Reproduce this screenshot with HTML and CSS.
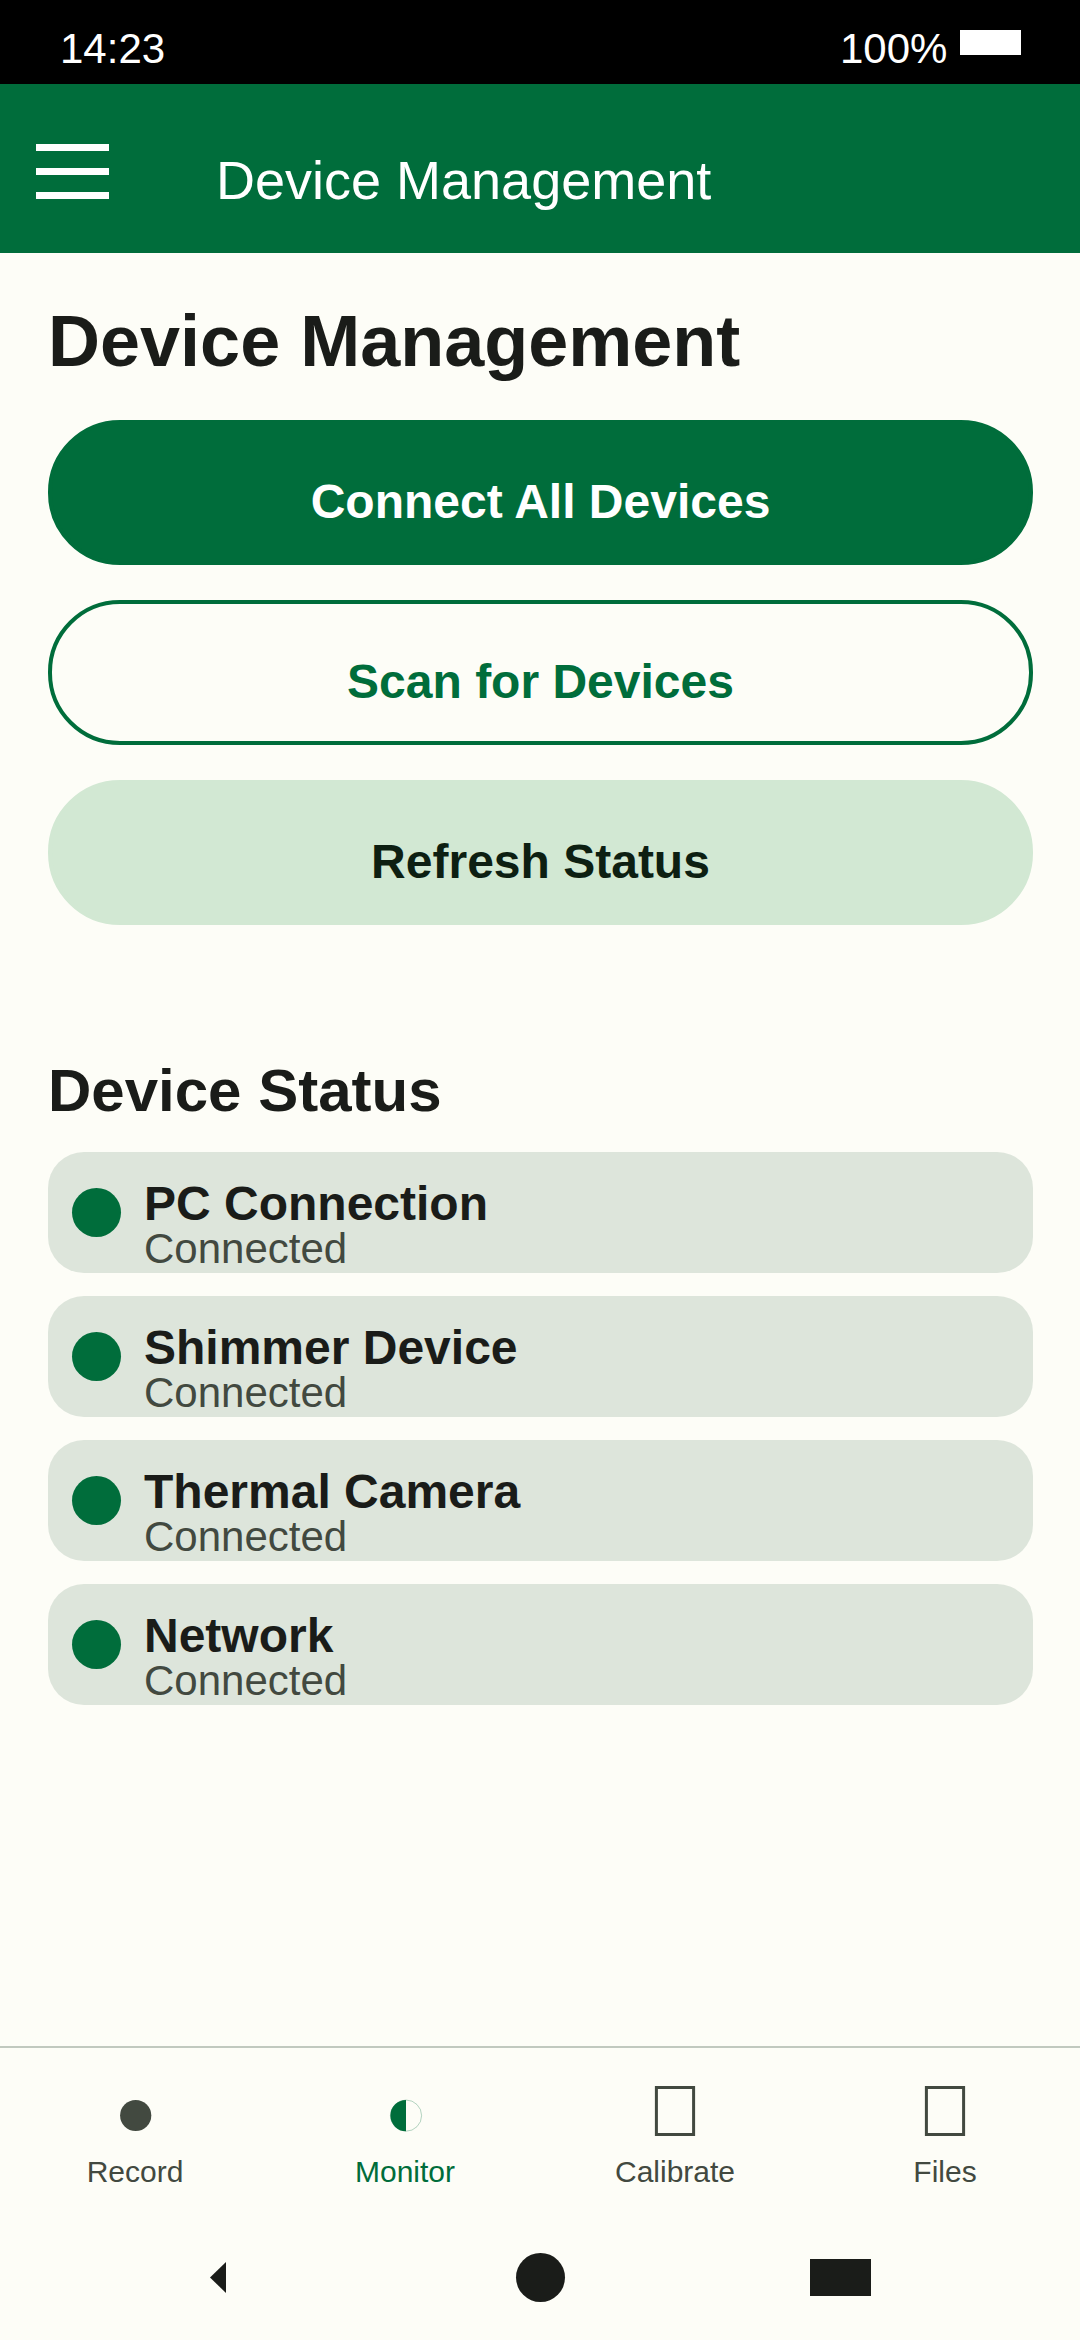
FILE: index.html
```html
<!DOCTYPE html>
<html lang="en">
<head>
  <meta charset="utf-8">
  <title>Device Management</title>
  <link rel="stylesheet" href="styles.css">
</head>
<body>
  <div class="screen">
    <div class="status-bar">
      <span class="clock">14:23</span>
      <span class="battery-level">100%</span>
      <span class="battery"></span>
    </div>
    <header class="app-bar">
      <div class="menu"><span></span><span></span><span></span></div>
      <div class="app-title">Device Management</div>
    </header>
    <main class="content">
      <h1 class="heading">Device Management</h1>
      <div class="actions">
        <button class="btn btn-filled">Connect All Devices</button>
        <button class="btn btn-outlined">Scan for Devices</button>
        <button class="btn btn-tonal">Refresh Status</button>
      </div>
      <h2 class="subheading">Device Status</h2>
      <div class="devices">
        <div class="device"><span class="dot"></span><div class="info"><div class="name">PC Connection</div><div class="state">Connected</div></div></div>
        <div class="device"><span class="dot"></span><div class="info"><div class="name">Shimmer Device</div><div class="state">Connected</div></div></div>
        <div class="device"><span class="dot"></span><div class="info"><div class="name">Thermal Camera</div><div class="state">Connected</div></div></div>
        <div class="device"><span class="dot"></span><div class="info"><div class="name">Network</div><div class="state">Connected</div></div></div>
      </div>
    </main>
    <nav class="tabs">
      <div class="tab">
        <svg class="icon" viewBox="0 0 60 60"><circle cx="30.7" cy="35.5" r="15.6" fill="currentColor"/></svg>
        <span>Record</span>
      </div>
      <div class="tab active">
        <svg class="icon" viewBox="0 0 60 60"><circle cx="31" cy="35.6" r="15.6" fill="none" stroke="currentColor" stroke-width="0.3"/><path d="M31 20A15.6 15.6 0 0 0 31 51.2Z" fill="currentColor"/></svg>
        <span>Monitor</span>
      </div>
      <div class="tab">
        <svg class="icon" viewBox="0 0 60 60"><rect x="11.4" y="7.5" width="37.2" height="47" fill="none" stroke="currentColor" stroke-width="3"/></svg>
        <span>Calibrate</span>
      </div>
      <div class="tab">
        <svg class="icon" viewBox="0 0 60 60"><rect x="11.4" y="7.5" width="37.2" height="47" fill="none" stroke="currentColor" stroke-width="3"/></svg>
        <span>Files</span>
      </div>
    </nav>
    <div class="system-nav">
      <svg class="back" viewBox="0 0 16 31"><path d="M0 15.5L16 0V31Z" fill="currentColor"/></svg>
      <span class="home"></span>
      <span class="recents"></span>
    </div>
  </div>
</body>
</html>
```

FILE: styles.css
```css
* {
  box-sizing: border-box;
  margin: 0;
}

body {
  background: #fdfdf7;
  color: #1a1c19;
  font-family: "Liberation Sans", Arial, sans-serif;
}

.screen {
  display: flex;
  flex-direction: column;
  width: 1080px;
  height: 2340px;
  overflow: hidden;
}

.status-bar {
  display: flex;
  align-items: flex-start;
  height: 84px;
  padding: 25px 59px 0 60px;
  background: #000;
  color: #fff;
  font-size: 42px;
  line-height: 47px;
}

.clock {
  flex: 1;
}

.battery-level {
  width: 120px;
}

.battery {
  width: 61px;
  height: 25px;
  margin-top: 5px;
  background: #fff;
}

.app-bar {
  display: flex;
  align-items: flex-start;
  gap: 107px;
  height: 169px;
  padding: 60px 36px 0;
  background: #006d3b;
  color: #fff;
}

.menu {
  display: grid;
  gap: 17px;
  width: 73px;
}

.menu span {
  height: 7px;
  background: #fff;
}

.app-title {
  padding-top: 6px;
  font-size: 54px;
  line-height: 60px;
}

.content {
  flex: 1;
  padding: 48px 47px 0 48px;
}

.heading {
  font-size: 72px;
  line-height: 80px;
}

.actions {
  display: grid;
  gap: 35px;
  margin-top: 39px;
}

.btn {
  height: 145px;
  padding: 18px 0 0;
  border: 4px solid transparent;
  border-radius: 72px;
  font: bold 48px/53px "Liberation Sans", Arial, sans-serif;
  text-align: center;
}

.btn-filled {
  border-color: #006d3b;
  background: #006d3b;
  color: #fff;
}

.btn-outlined {
  border-color: #006d3b;
  background: transparent;
  color: #006d3b;
}

.btn-tonal {
  border-color: #d2e8d3;
  background: #d2e8d3;
  color: #0d1f12;
}

.subheading {
  margin-top: 132px;
  font-size: 60px;
  line-height: 67px;
}

.devices {
  display: grid;
  gap: 23px;
  margin-top: 28px;
}

.device {
  display: flex;
  align-items: flex-start;
  gap: 23px;
  height: 121px;
  padding: 25px 24px 0;
  border-radius: 36px;
  background: #dde5db;
}

.dot {
  width: 49px;
  height: 49px;
  margin-top: 11px;
  border-radius: 50%;
  background: #006d3b;
}

.name {
  font-size: 48px;
  font-weight: bold;
  line-height: 53px;
}

.state {
  margin-top: -5px;
  color: #424940;
  font-size: 42px;
  line-height: 47px;
}

.tabs {
  display: grid;
  grid-template-columns: repeat(4, 1fr);
  height: 154px;
  padding-top: 32px;
  border-top: 2px solid #c1c9bf;
  color: #424940;
}

.tab {
  display: flex;
  flex-direction: column;
  align-items: center;
  gap: 15px;
  font-size: 30px;
  line-height: 33px;
}

.active {
  color: #006d3b;
}

.icon {
  width: 60px;
  height: 60px;
}

.system-nav {
  display: flex;
  align-items: center;
  height: 140px;
  padding: 15px 209px 0 210px;
}

.back {
  width: 16px;
  height: 31px;
}

.home {
  width: 49px;
  height: 49px;
  margin: 0 245px 0 290px;
  border-radius: 50%;
  background: #1a1c19;
}

.recents {
  width: 61px;
  height: 37px;
  background: #1a1c19;
}
```
